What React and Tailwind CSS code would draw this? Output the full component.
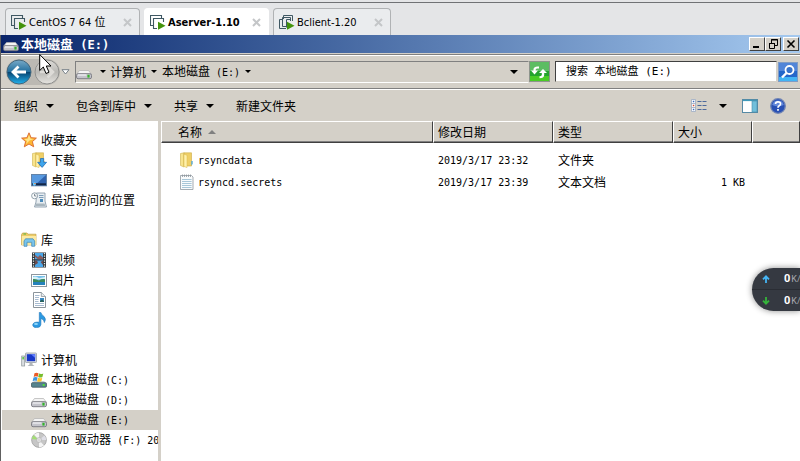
import React from "react";

function Txt({ children, bold = false }) {
  const runs = children.match(/[\x20-\x7e]+|[^\x20-\x7e]+/g) || [];
  return (
    <span className="whitespace-pre">
      {runs.map((run, i) =>
        /^[\x20-\x7e]/.test(run) ? (
          <span key={i} className={bold ? "font-['DejaVu_Sans_Mono',monospace] text-[12px]" : "font-['DejaVu_Sans_Mono',monospace] text-[10px]"}>
            {run}
          </span>
        ) : (
          <span key={i}>{run}</span>
        )
      )}
    </span>
  );
}

function Caret({ up = false, className = "" }) {
  return (
    <svg viewBox="0 0 8 4" className={`h-1 w-2 shrink-0 ${className}`} fill="currentColor" aria-hidden="true">
      <path d={up ? "M0 4L4 0L8 4Z" : "M0 0H8L4 4Z"} />
    </svg>
  );
}

function SmallCaret() {
  return (
    <svg viewBox="0 0 6 3" className="h-[3px] w-1.5 shrink-0" aria-hidden="true">
      <path d="M0 0H6L3 3Z" />
    </svg>
  );
}

function Icon({ children, className = "" }) {
  return (
    <svg viewBox="0 0 16 16" className={`size-4 shrink-0 ${className}`} aria-hidden="true">
      {children}
    </svg>
  );
}

function DriveIcon() {
  return (
    <Icon>
      <path d="M3.5 6.5H12.5L15.4 10.2H.6Z" fill="#f4f4f4" stroke="#b0b0b0" strokeWidth=".7" />
      <rect x=".5" y="9.7" width="15" height="5" rx="1.6" fill="#c4c4cb" stroke="#77777f" strokeWidth=".9" />
      <path d="M1.8 11H10.5" stroke="#ededf1" strokeWidth="1.4" />
      <rect x="11.4" y="10.8" width="2.2" height="2.8" fill="#33b32c" />
    </Icon>
  );
}

function SystemDriveIcon() {
  return (
    <Icon>
      <path d="M3 9H13L15.6 11.5H.4Z" fill="#c3d0d4" />
      <rect x=".5" y="10.7" width="15" height="4.5" rx="1" fill="#54848e" stroke="#465c62" strokeWidth=".8" />
      <rect x="11.7" y="12" width="2" height="2" fill="#4fdc3c" />
      <path d="M3.5 1.3Q5.5 0 7.5 1.3L6.7 4.8Q4.8 3.8 2.7 5Z" fill="#ec5a24" />
      <path d="M8 1.6Q10 2.6 12.3 1.5L11.4 5Q9.5 6 7.2 5Z" fill="#78bd2d" />
      <path d="M2.5 5.6Q4.6 4.4 6.6 5.5L5.7 9Q3.8 8 1.6 9.2Z" fill="#3b94df" />
      <path d="M7 5.8Q9 6.8 11.3 5.7L10.4 9.3Q8.3 10.3 6.1 9.2Z" fill="#fcc52b" />
    </Icon>
  );
}

function StarIcon() {
  return (
    <Icon>
      <path d="M8 .8L10.1 5.7L15.4 6.1L11.4 9.6L12.7 14.8L8 12L3.3 14.8L4.6 9.6L.6 6.1L5.9 5.7Z" fill="#fdb733" stroke="#d9652b" strokeWidth=".9" />
      <path d="M8 3L9.4 6.8L13 7L8.5 8.6L5 12L6 9L3.2 7L6.6 6.7Z" fill="#ffe58a" />
    </Icon>
  );
}

function FolderIcon({ download = false }) {
  return (
    <Icon>
      <path d="M1.5 1.5L5 .8V15L1.5 13.5Z" fill="#f8e48d" stroke="#cfb451" strokeWidth=".6" />
      <path d="M5 .8H12.5V14H5Z" fill="#efcf66" stroke="#cba944" strokeWidth=".6" />
      <path d="M5 2.2L8 3.3V15.6L5 14.5Z" fill="#fff1ac" stroke="#d8b94d" strokeWidth=".5" />
      <path d="M12.3 9H13.7V12L12.3 13.5Z" fill={download ? "#efcf66" : "#55a9d6"} />
      {download && <path d="M9.5 6.5H12.7V10.3H15.6L11.1 15.4L6.6 10.3H9.5Z" fill="#3ea5ec" stroke="#1966b8" strokeWidth=".7" />}
    </Icon>
  );
}

function DesktopIcon() {
  return (
    <Icon>
      <rect x=".5" y="2.5" width="15" height="11.3" fill="#2f62ad" stroke="#6483a6" />
      <path d="M1 3H15L6 11.3H1Z" fill="#5899df" />
      <rect x="1" y="11.3" width="14" height="2" fill="#122646" />
      <circle cx="3.3" cy="12" r="1.7" fill="#69c9ff" />
      <rect x="3.3" y="11" width="1.3" height="1" fill="#ff7a32" />
    </Icon>
  );
}

function RecentIcon() {
  return (
    <Icon>
      <path d="M5.5 1H14V9L15.5 15H3.5L5 10Z" fill="#e8eef2" stroke="#7d91a1" strokeWidth=".8" />
      <path d="M8 3.5H12.5M8 5.5H12.5" stroke="#7e9db7" />
      <rect x="9" y="7" width="3" height="3" fill="#4b8bbb" />
      <path d="M5 11.5H13.5L14.3 14H4.2Z" fill="#a9b6be" />
      <circle cx="3.6" cy="3.8" r="3" fill="#fafcfd" stroke="#8998a4" strokeWidth=".9" />
      <path d="M3.6 1.9V4H5.3" fill="none" stroke="#5a6975" strokeWidth=".8" />
    </Icon>
  );
}

function LibraryIcon() {
  return (
    <Icon>
      <path d="M.5 2.7L1.5 1H6L7 2.2H15V13H.5Z" fill="#eccb65" stroke="#c4a145" strokeWidth=".7" />
      <path d="M.8 4H15V13H.8Z" fill="#fbe9a2" />
      <rect x="2.5" y="1.5" width="2.5" height="1" fill="#4eb547" />
      <path d="M3 14.3V9L4.5 6.8H12L13.7 9V14.3H10.7V10.3H6V14.3Z" fill="#78c4ec" stroke="#3c85b5" strokeWidth=".7" />
    </Icon>
  );
}

function VideoIcon() {
  return (
    <Icon>
      <rect x="1" y=".5" width="14" height="15" fill="#30353a" />
      <path d="M2.5 1V15M13.5 1V15" stroke="#e5eeee" strokeWidth="1.3" strokeDasharray="1.3 1.2" />
      <rect x="4" y="1" width="8" height="6.3" fill="#4ba7e9" />
      <rect x="4" y="8.5" width="8" height="6.5" fill="#4ba7e9" />
      <path d="M4 3L7 5L9 3L12 5.5V7.3H7L4 5Z" fill="#8a5c5d" />
      <path d="M4 8.5H6L7 11L4 13ZM12 8.5L9.5 10L12 13Z" fill="#704b4c" />
    </Icon>
  );
}

function PictureIcon() {
  return (
    <Icon>
      <rect x=".5" y="2.5" width="15" height="12" fill="#fff" stroke="#8c969e" />
      <rect x="2" y="4" width="12" height="9" fill="#76c1ec" />
      <path d="M2 5Q5 3.5 8 6.3L14 5V7L2 7.4Z" fill="#d8f0f7" />
      <path d="M2 7Q5 6.5 8 8.5Q11 6.5 14 7.2V10H2Z" fill="#3b8a5c" />
      <path d="M2 10H14V13H2Z" fill="#2582bb" />
    </Icon>
  );
}

function DocumentIcon() {
  return (
    <Icon>
      <path d="M2.5.5H10.3L14.5 4.5V15.5H2.5Z" fill="#fff" stroke="#8b949b" />
      <path d="M10.3.5V4.5H14.5" fill="#e6eaed" stroke="#8b949b" strokeWidth=".8" />
      <path d="M4 3.5H8.5M4 5.5H8M4 7.5H7.5M4 9.5H7.5M4 11.5H13M4 13.5H13" stroke="#a8bbd0" />
      <rect x="9" y="6" width="4" height="4" fill="#398ac5" />
      <path d="M9 9L11 7.5L13 9V10H9Z" fill="#27615c" />
    </Icon>
  );
}

function MusicIcon() {
  return (
    <Icon>
      <path d="M8.3.4H9.8Q10.6 3.2 13 4.4Q15.6 6.8 13.4 10.6Q13.2 7.4 9.9 6.4V12.4Q9.6 15.6 5.4 15.6Q1.4 15.4 1.8 12.4Q3 9.6 8.3 10.2Z" fill="#2c99e1" stroke="#2277b8" strokeWidth=".6" />
      <ellipse cx="5" cy="11.9" rx="2" ry="1" fill="#91d8fb" />
    </Icon>
  );
}

function ComputerIcon() {
  return (
    <Icon>
      <rect x=".7" y="4" width="3" height="10" fill="#d9dde0" stroke="#8d9499" strokeWidth=".7" />
      <rect x="1.4" y="5" width="1.5" height="2.4" fill="#53c83f" />
      <rect x="4.5" y="1" width="11" height="9.5" rx=".7" fill="#dadde2" stroke="#959da5" strokeWidth=".8" />
      <rect x="5.8" y="2.2" width="8.4" height="7" fill="#1838c8" />
      <path d="M10 2.2H14.2V6Z" fill="#617fff" />
      <path d="M8.5 10.7H11.5V12.5L13.5 14H6.5L8.5 12.5Z" fill="#b2b7bb" />
    </Icon>
  );
}

function DiscIcon() {
  return (
    <Icon>
      <circle cx="8" cy="8" r="7.4" fill="#c6c6c6" stroke="#989898" strokeWidth=".7" />
      <path d="M8 8L3 2.5Q5.5.5 8 .8ZM8 8L13 13.5Q10.5 15.5 8 15.2Z" fill="#f5f5f5" />
      <path d="M8 8L15.2 8Q15 5 13.5 3.5Z" fill="#dedee6" />
      <path d="M8 8L.9 7Q1.2 4.6 2.5 3.2Z" fill="#a2dd75" />
      <circle cx="8" cy="8" r="2.5" fill="#e9e9e9" stroke="#aaa" strokeWidth=".6" />
      <circle cx="8" cy="8" r="1" fill="#fff" stroke="#999" strokeWidth=".4" />
    </Icon>
  );
}

function TextFileIcon() {
  return (
    <Icon>
      <path d="M1.5 1.5H12.5L14 3V15.5H1.5Z" fill="#f9fbfc" stroke="#8f989f" strokeWidth=".8" />
      <path d="M3 5.5H12.6M3 7.5H12.6M3 9.5H12.6M3 11.5H12.6M3 13.5H12.6" stroke="#a9c7d8" />
      <path d="M3.5.5V3M5.5.5V3M7.5.5V3M9.5.5V3M11.5.5V3" stroke="#8d969c" strokeWidth=".8" />
    </Icon>
  );
}

function TabIcon({ many = false }) {
  return (
    <Icon>
      {many ? (
        <g fill="none" stroke="#3f5863" strokeWidth="1">
          <path d="M4.5 4V.5H13.5V6" />
          <path d="M8 2.5H3.5V11.5H7M4 4.5H.5V13.5H7" />
          <path d="M11.5 6V2.5H8M7.5 12.5V4.5H11.5" />
        </g>
      ) : (
        <g fill="none" stroke="#3f5863" strokeWidth="1.1">
          <path d="M3 10.5H.5V.5H11.5V3" />
          <path d="M7 13.5H3.5V3.5H13.5V7" />
        </g>
      )}
      <path d="M8 6.8L15.5 10.7L8 14.8Z" fill="#43930c" />
    </Icon>
  );
}

const tabs = [
  { label: "CentOS 7 64 位", width: "w-[135px]" },
  { label: "Aserver-1.10", width: "w-[125px]", active: true },
  { label: "Bclient-1.20", width: "w-[118px]", many: true },
];

function Tabs() {
  return (
    <nav className="flex h-[33px] items-end gap-1 border-t border-[#707275] pl-[5px] font-['DejaVu_Sans_Condensed','Open_Sans','Noto_Sans_CJK_SC',sans-serif] text-[11px]">
      {tabs.map((t) => (
        <div
          key={t.label}
          className={`flex h-[27px] items-center rounded-t border border-b-0 pr-[7px] pl-[5px] ${t.width} ${t.active ? "border-white bg-white font-bold" : "border-[#b0b2b4] bg-[#eaecee]"}`}
        >
          <button type="button" className="flex flex-1 items-center gap-0.5 pt-px text-left whitespace-nowrap">
            <TabIcon many={t.many} />
            {t.label}
          </button>
          <button type="button" aria-label="关闭" className="text-[#c4c6c8]">
            <svg viewBox="0 0 9 9" className="size-[9px]" stroke="currentColor" strokeWidth="2">
              <path d="M1 1L8 8M8 1L1 8" />
            </svg>
          </button>
        </div>
      ))}
    </nav>
  );
}

function WindowButton({ label, children }) {
  return (
    <button
      type="button"
      aria-label={label}
      className="flex h-3.5 w-4 items-center justify-center border border-t-white border-r-[#404040] border-b-[#404040] border-l-white bg-[#d4d0c8]"
    >
      <svg viewBox="0 0 10 10" className="size-2.5" fill="none" stroke="#000">
        {children}
      </svg>
    </button>
  );
}

function TitleBar() {
  return (
    <header className="flex h-[18px] items-center bg-linear-to-r from-[#0a246a] to-[#a6caf0] pr-px pl-0.5 text-white">
      <DriveIcon />
      <h1 className="flex-1 pl-0.5 text-[13px] leading-[18px] font-bold">
        <Txt bold>本地磁盘 (E:)</Txt>
      </h1>
      <WindowButton label="最小化">
        <path d="M1 8H7" strokeWidth="2" />
      </WindowButton>
      <WindowButton label="还原">
        <path d="M3.5 4V.5H9.5V6.5H7M3 1H10M1.5 4V9.5H6.5V4M1 4.5H7" />
      </WindowButton>
      <span className="w-0.5" />
      <WindowButton label="关闭">
        <path d="M1.5 1.5L8.5 8.5M8.5 1.5L1.5 8.5" strokeWidth="1.6" />
      </WindowButton>
    </header>
  );
}

function NavButtons() {
  return (
    <div className="flex items-center">
      <div className="flex items-center gap-0.5 rounded-full bg-[#bcb9b3]">
        <button type="button" aria-label="后退">
          <svg viewBox="0 0 26 26" className="size-[26px]">
            <defs>
              <linearGradient id="back" x1="0" y1="0" x2="0" y2="1">
                <stop offset="0" stopColor="#78aac8" />
                <stop offset=".48" stopColor="#24709f" />
                <stop offset=".5" stopColor="#07436f" />
                <stop offset="1" stopColor="#21b1ee" />
              </linearGradient>
            </defs>
            <circle cx="13" cy="13" r="12" fill="url(#back)" stroke="#45677c" />
            <path d="M12.5 7.5L7 13L12.5 18.5M7.5 13H20" fill="none" stroke="#fff" strokeWidth="2.8" />
          </svg>
        </button>
        <button type="button" aria-label="前进">
          <svg viewBox="0 0 26 26" className="size-[26px]">
            <defs>
              <linearGradient id="forward" x1="0" y1="0" x2="0" y2="1">
                <stop offset="0" stopColor="#dedcd8" />
                <stop offset=".5" stopColor="#b9b8b4" />
                <stop offset="1" stopColor="#e6e4e0" />
              </linearGradient>
            </defs>
            <circle cx="13" cy="13" r="12" fill="url(#forward)" stroke="#90908e" />
            <path d="M13.5 7.5L19 13L13.5 18.5M18.5 13H6" fill="none" stroke="#dddbd7" strokeWidth="2.6" />
          </svg>
        </button>
      </div>
      <button type="button" aria-label="最近的页面" className="ml-px">
        <svg viewBox="0 0 9 6" className="h-1.5 w-[9px]">
          <path d="M1 .7H8L4.5 5Z" fill="#fff" stroke="#6d7780" strokeWidth=".9" />
        </svg>
      </button>
    </div>
  );
}

function AddressBar() {
  return (
    <div className="flex h-[35px] items-center border-t border-b border-t-[#808080] border-b-[#808080] pr-0.5 pl-[5px] inset-shadow-[0_1px_0_#fff]">
      <NavButtons />
      <div className="ml-[5px] flex h-[22px] min-w-0 flex-1 items-center border border-t-[#808080] border-r-transparent border-b-white border-l-[#808080] pr-2.5">
        <DriveIcon />
        <button type="button" aria-label="展开" className="pr-1 pl-2">
          <SmallCaret />
        </button>
        <button type="button" className="flex items-center gap-[5px] pr-[5px]">
          <Txt>计算机</Txt>
          <SmallCaret />
        </button>
        <button type="button" className="flex items-center gap-[5px]">
          <Txt>本地磁盘 (E:)</Txt>
          <SmallCaret />
        </button>
        <button type="button" aria-label="以前的位置" className="ml-auto">
          <Caret />
        </button>
      </div>
      <button type="button" aria-label="刷新" className="h-[22px] w-[22px]">
        <svg viewBox="0 0 22 22" className="size-[22px]">
          <rect x=".5" y=".5" width="20" height="20" fill="#24a32d" stroke="#8d948c" />
          <path d="M1 1H20V10H1Z" fill="#5cbd62" />
          <path d="M1 15H20V20H1Z" fill="#49cb25" />
          <path d="M2 9.5H9L5.5 13.5ZM4.5 10V8Q5 5.5 8.5 5.5H10V7.5H8Q6.7 7.7 6.6 9V10Z" fill="#fff" />
          <path d="M10 12H18L14 8ZM12.8 12V14Q12.5 15.2 10.5 15.3V17.3Q15 17.2 15.2 14V12Z" fill="#fff" />
        </svg>
      </button>
      <input
        type="text"
        aria-label="搜索"
        placeholder="搜索 本地磁盘 (E:)"
        className="mr-px ml-1 h-[21px] w-[222px] border border-t-[#404040] border-r-[#d4d0c8] border-b-[#d4d0c8] border-l-[#404040] bg-white pl-2.5 font-['DejaVu_Sans_Mono','Noto_Sans_CJK_SC',monospace] text-[11px] placeholder:text-black"
      />
      <button type="button" aria-label="开始搜索">
        <svg viewBox="0 0 20 20" className="size-5">
          <rect x=".5" y=".5" width="19" height="19" fill="#2467ca" stroke="#7f9bc4" />
          <path d="M1 1H19V9H1Z" fill="#5185d8" />
          <path d="M1 15H19V19H1Z" fill="#42b4f4" />
          <circle cx="11.5" cy="8" r="4" fill="#3873ca" stroke="#fff" strokeWidth="1.8" />
          <path d="M8.5 11L4 15.5" stroke="#fff" strokeWidth="2.4" />
        </svg>
      </button>
    </div>
  );
}

function Toolbar() {
  return (
    <div className="flex h-8 items-center gap-[22px] border-t border-white pr-3.5 pl-[13px]">
      {["组织", "包含到库中", "共享"].map((label) => (
        <button key={label} type="button" className="flex items-center gap-2">
          {label}
          <Caret />
        </button>
      ))}
      <button type="button">新建文件夹</button>
      <div className="ml-auto flex items-center">
        <button type="button" aria-label="更改您的视图">
          <Icon>
            <path d="M6.5 3.5H15.5M6.5 7.5H15.5M6.5 11.5H15.5" stroke="#4d6a9c" strokeDasharray="4 1" />
            <path d="M.5 1.5H4.5V13.5H.5ZM.5 5.5H4.5M.5 9.5H4.5" fill="#fff" stroke="#9baac2" strokeWidth=".8" />
            <path d="M1.8 3.5H3.3" stroke="#3c6bbd" strokeWidth="1.5" />
            <path d="M1.8 7.5H3.3" stroke="#d04d37" strokeWidth="1.5" />
            <path d="M1.8 11.5H3.3" stroke="#3c6bbd" strokeWidth="1.5" />
          </Icon>
        </button>
        <button type="button" aria-label="更多选项" className="px-3">
          <Caret />
        </button>
        <button type="button" aria-label="显示预览窗格" className="ml-[3px]">
          <Icon>
            <rect x=".5" y="1.5" width="15" height="13" fill="#fff" stroke="#568aa5" />
            <path d="M1 2.5H15" stroke="#3e9aba" strokeWidth="1.2" />
            <rect x="10" y="3" width="5" height="11" fill="#71bfdb" stroke="#4b8aa8" strokeWidth=".6" />
          </Icon>
        </button>
        <button type="button" aria-label="获取帮助" className="ml-3">
          <Icon>
            <circle cx="8" cy="8" r="7.3" fill="#2850b4" stroke="#7185b4" strokeWidth="1.3" />
            <path d="M2.2 7A6 6 0 0 1 13.8 7Q8 9.5 2.2 7Z" fill="#6489da" />
            <path d="M5.5 6Q5.6 3.8 8 3.8Q10.6 3.8 10.5 6Q10.4 7.3 8.9 8Q8 8.5 8 9.8M8 11V12.8" fill="none" stroke="#fff" strokeWidth="1.7" />
          </Icon>
        </button>
      </div>
    </div>
  );
}

const groups = [
  {
    label: "收藏夹",
    Mark: StarIcon,
    items: [
      { label: "下载", Mark: () => <FolderIcon download /> },
      { label: "桌面", Mark: DesktopIcon },
      { label: "最近访问的位置", Mark: RecentIcon },
    ],
  },
  {
    label: "库",
    Mark: LibraryIcon,
    items: [
      { label: "视频", Mark: VideoIcon },
      { label: "图片", Mark: PictureIcon },
      { label: "文档", Mark: DocumentIcon },
      { label: "音乐", Mark: MusicIcon },
    ],
  },
  {
    label: "计算机",
    Mark: ComputerIcon,
    items: [
      { label: "本地磁盘 (C:)", Mark: SystemDriveIcon },
      { label: "本地磁盘 (D:)", Mark: DriveIcon },
      { label: "本地磁盘 (E:)", Mark: DriveIcon, selected: true },
      { label: "DVD 驱动器 (F:) 20", Mark: DiscIcon },
    ],
  },
];

function Sidebar() {
  return (
    <aside className="flex w-[160px] shrink-0 flex-col gap-5 overflow-hidden border-r-3 border-[#d4d0c8] bg-white pt-[9px] pl-px">
      {groups.map(({ label, Mark, items }) => (
        <section key={label}>
          <a href="#" className="flex h-5 items-center gap-1 pl-[19px]">
            <Mark />
            <Txt>{label}</Txt>
          </a>
          <ul>
            {items.map((item) => (
              <li key={item.label}>
                <a href="#" className={`flex h-5 items-center gap-1 pl-[29px] ${item.selected ? "bg-[#d4d0c8]" : ""}`}>
                  <item.Mark />
                  <Txt>{item.label}</Txt>
                </a>
              </li>
            ))}
          </ul>
        </section>
      ))}
    </aside>
  );
}

const files = [
  { name: "rsyncdata", date: "2019/3/17 23:32", type: "文件夹", size: "", Mark: FolderIcon },
  { name: "rsyncd.secrets", date: "2019/3/17 23:39", type: "文本文档", size: "1 KB", Mark: TextFileIcon },
];

function HeadCell({ children, first = false }) {
  return (
    <th
      scope="col"
      className={`h-[22px] border border-t-white border-r-[#404040] border-b-[#404040] border-l-white p-0 text-left font-normal inset-shadow-[0_-1px_0_#808080] ${first ? "pl-4" : "pl-1"}`}
    >
      {children}
    </th>
  );
}

function FileList() {
  return (
    <main className="min-w-0 flex-1 bg-white">
      <table className="w-full table-fixed border-separate border-spacing-0">
        <colgroup>
          <col className="w-[272px]" />
          <col className="w-[120px]" />
          <col className="w-[120px]" />
          <col className="w-[79px]" />
          <col />
        </colgroup>
        <thead className="bg-[#d4d0c8]">
          <tr>
            <HeadCell first>
              <span className="flex items-center gap-1.5">
                名称
                <Caret up className="text-[#808080]" />
              </span>
            </HeadCell>
            <HeadCell>修改日期</HeadCell>
            <HeadCell>类型</HeadCell>
            <HeadCell>大小</HeadCell>
            <HeadCell />
          </tr>
        </thead>
        <tbody className="before:block before:h-1.5">
          {files.map(({ name, date, type, size, Mark }) => (
            <tr key={name} className="h-[22px]">
              <td className="p-0 pl-[18px]">
                <a href="#" className="flex items-center gap-[3px]">
                  <Mark />
                  <Txt>{name}</Txt>
                </a>
              </td>
              <td className="p-0 pl-[5px]"><Txt>{date}</Txt></td>
              <td className="p-0 pl-[5px]"><Txt>{type}</Txt></td>
              <td className="p-0 pr-[7px] text-right"><Txt>{size}</Txt></td>
              <td className="p-0" />
            </tr>
          ))}
        </tbody>
      </table>
    </main>
  );
}

function SpeedRow({ up = false }) {
  return (
    <div className="flex h-[21px] items-center pl-2.5">
      <svg viewBox="0 0 8 8" className={`size-2 shrink-0 ${up ? "text-[#45b5f5]" : "text-[#35b53a]"}`} fill="none" stroke="currentColor" strokeWidth="1.8">
        <path d={up ? "M4 8V1.5M1 4.3L4 1.3L7 4.3" : "M4 0V6.5M1 3.7L4 6.7L7 3.7"} />
      </svg>
      <span className="ml-3.5 text-[11px] font-bold text-white">0</span>
      <span className="ml-px text-[9px] whitespace-nowrap text-[#a5a8af]">K/s</span>
    </div>
  );
}

function SpeedWidget() {
  return (
    <div className="absolute top-[268px] right-0 w-12 overflow-hidden rounded-l-full bg-[#353941] font-['Roboto',sans-serif] shadow-[0_0_6px_rgba(0,0,0,0.45)]">
      <SpeedRow up />
      <div className="border-t border-[#2a2d34]">
        <SpeedRow />
      </div>
    </div>
  );
}

export default function App() {
  return (
    <div className="relative flex min-h-screen flex-col overflow-hidden bg-[#e4e5e7] pt-0.5 font-['Noto_Sans_CJK_SC',sans-serif] text-[12px] leading-4 text-black">
      <Tabs />
      <div className="flex flex-1 flex-col border-l border-[#606060] bg-[#d4d0c8]">
        <TitleBar />
        <div className="h-px" />
        <AddressBar />
        <Toolbar />
        <div className="flex flex-1">
          <Sidebar />
          <FileList />
        </div>
      </div>
      <SpeedWidget />
      <svg viewBox="0 0 13 22" className="absolute top-[53px] left-[39px] h-[22px] w-[13px]" aria-hidden="true">
        <path d="M.7 1.5V17.5L4.3 14L7 20.5L10 19.2L7.3 13H12Z" fill="#fff" stroke="#000" />
      </svg>
    </div>
  );
}
